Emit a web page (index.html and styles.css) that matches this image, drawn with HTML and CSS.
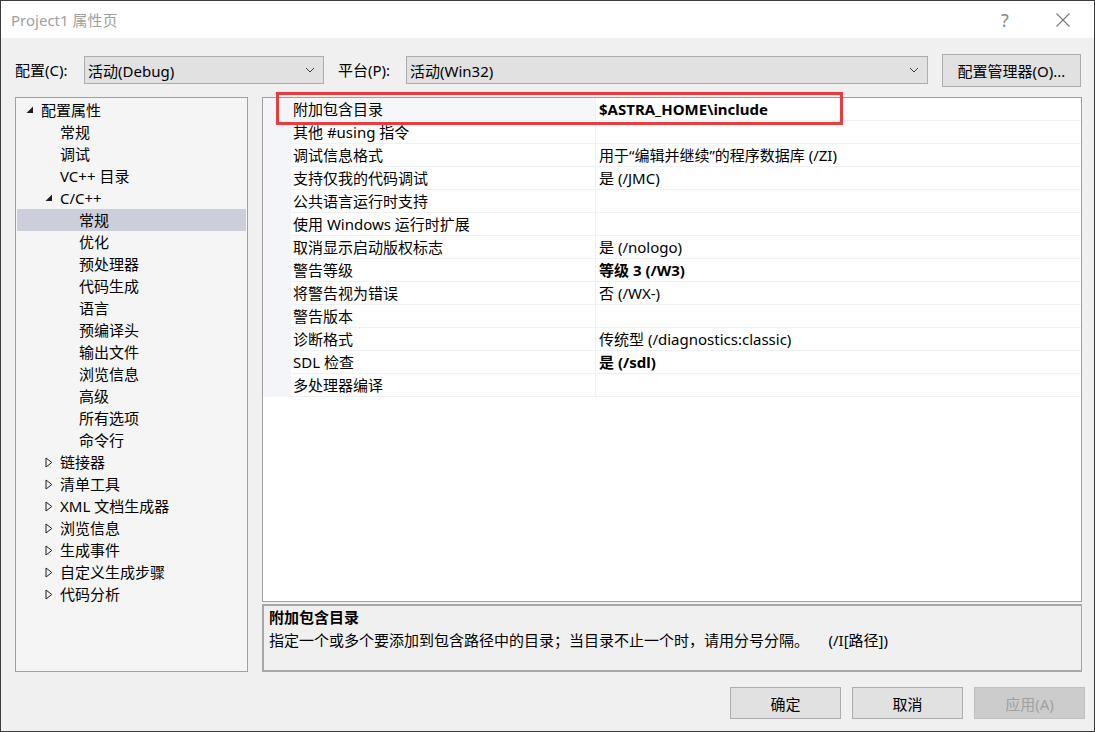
FILE: index.html
```html
<!DOCTYPE html>
<html lang="zh-CN">
<head>
<meta charset="utf-8">
<title>Project1 属性页</title>
<link rel="stylesheet" href="styles.css">
</head>
<body>
<div class="window">
  <div class="titlebar">
    <span class="title">Project1 属性页</span>
    <span class="help">?</span>
    <span class="close">
      <svg width="16" height="16" viewBox="0 0 16 16"><path d="M1.5 1.5 L14.5 14.5 M14.5 1.5 L1.5 14.5" stroke="#7a7a7a" stroke-width="1.1" fill="none"/></svg>
    </span>
  </div>

  <div class="toolbar">
    <span class="label lbl-config">配置(C):</span>
    <div class="combo combo-config">
      <span>活动(Debug)</span>
      <svg class="chev" width="10" height="6" viewBox="0 0 10 6"><path d="M1 1 L5 5 L9 1" stroke="#404040" stroke-width="1" fill="none"/></svg>
    </div>
    <span class="label lbl-platform">平台(P):</span>
    <div class="combo combo-platform">
      <span>活动(Win32)</span>
      <svg class="chev" width="10" height="6" viewBox="0 0 10 6"><path d="M1 1 L5 5 L9 1" stroke="#404040" stroke-width="1" fill="none"/></svg>
    </div>
    <div class="btn btn-manager">配置管理器(O)...</div>
  </div>

  <div class="main">
    <div class="tree">
      <div class="node l1"><span class="exp"><svg width="8" height="8" viewBox="0 0 8 8"><path d="M7 0.5 L7 7 L0.5 7 Z" fill="#1e1e1e"/></svg></span>配置属性</div>
      <div class="node l2">常规</div>
      <div class="node l2">调试</div>
      <div class="node l2">VC++ 目录</div>
      <div class="node l2e"><span class="exp"><svg width="8" height="8" viewBox="0 0 8 8"><path d="M7 0.5 L7 7 L0.5 7 Z" fill="#1e1e1e"/></svg></span>C/C++</div>
      <div class="node l3 selected">常规</div>
      <div class="node l3">优化</div>
      <div class="node l3">预处理器</div>
      <div class="node l3">代码生成</div>
      <div class="node l3">语言</div>
      <div class="node l3">预编译头</div>
      <div class="node l3">输出文件</div>
      <div class="node l3">浏览信息</div>
      <div class="node l3">高级</div>
      <div class="node l3">所有选项</div>
      <div class="node l3">命令行</div>
      <div class="node l2e"><span class="col"><svg width="8" height="11" viewBox="0 0 8 11"><path d="M1 1 L6.8 5.5 L1 10 Z" fill="none" stroke="#1e1e1e" stroke-width="1"/></svg></span>链接器</div>
      <div class="node l2e"><span class="col"><svg width="8" height="11" viewBox="0 0 8 11"><path d="M1 1 L6.8 5.5 L1 10 Z" fill="none" stroke="#1e1e1e" stroke-width="1"/></svg></span>清单工具</div>
      <div class="node l2e"><span class="col"><svg width="8" height="11" viewBox="0 0 8 11"><path d="M1 1 L6.8 5.5 L1 10 Z" fill="none" stroke="#1e1e1e" stroke-width="1"/></svg></span>XML 文档生成器</div>
      <div class="node l2e"><span class="col"><svg width="8" height="11" viewBox="0 0 8 11"><path d="M1 1 L6.8 5.5 L1 10 Z" fill="none" stroke="#1e1e1e" stroke-width="1"/></svg></span>浏览信息</div>
      <div class="node l2e"><span class="col"><svg width="8" height="11" viewBox="0 0 8 11"><path d="M1 1 L6.8 5.5 L1 10 Z" fill="none" stroke="#1e1e1e" stroke-width="1"/></svg></span>生成事件</div>
      <div class="node l2e"><span class="col"><svg width="8" height="11" viewBox="0 0 8 11"><path d="M1 1 L6.8 5.5 L1 10 Z" fill="none" stroke="#1e1e1e" stroke-width="1"/></svg></span>自定义生成步骤</div>
      <div class="node l2e"><span class="col"><svg width="8" height="11" viewBox="0 0 8 11"><path d="M1 1 L6.8 5.5 L1 10 Z" fill="none" stroke="#1e1e1e" stroke-width="1"/></svg></span>代码分析</div>
    </div>

    <div class="right">
      <div class="grid">
        <div class="rows">
          <div class="row first"><div class="name">附加包含目录</div><div class="value bold">$ASTRA_HOME\include</div></div>
          <div class="row"><div class="name">其他 #using 指令</div><div class="value"></div></div>
          <div class="row"><div class="name">调试信息格式</div><div class="value">用于“编辑并继续”的程序数据库 (/ZI)</div></div>
          <div class="row"><div class="name">支持仅我的代码调试</div><div class="value">是 (/JMC)</div></div>
          <div class="row"><div class="name">公共语言运行时支持</div><div class="value"></div></div>
          <div class="row"><div class="name">使用 Windows 运行时扩展</div><div class="value"></div></div>
          <div class="row"><div class="name">取消显示启动版权标志</div><div class="value">是 (/nologo)</div></div>
          <div class="row"><div class="name">警告等级</div><div class="value bold">等级 3 (/W3)</div></div>
          <div class="row"><div class="name">将警告视为错误</div><div class="value">否 (/WX-)</div></div>
          <div class="row"><div class="name">警告版本</div><div class="value"></div></div>
          <div class="row"><div class="name">诊断格式</div><div class="value">传统型 (/diagnostics:classic)</div></div>
          <div class="row"><div class="name">SDL 检查</div><div class="value bold">是 (/sdl)</div></div>
          <div class="row"><div class="name">多处理器编译</div><div class="value"></div></div>
        </div>
        <div class="highlight"></div>
      </div>
      <div class="desc">
        <div class="desc-title">附加包含目录</div>
        <div class="desc-text">指定一个或多个要添加到包含路径中的目录；当目录不止一个时，请用分号分隔。     (/I[路径])</div>
      </div>
    </div>
  </div>

  <div class="footer">
    <div class="btn btn-foot">确定</div>
    <div class="btn btn-foot">取消</div>
    <div class="btn btn-foot disabled">应用(A)</div>
  </div>
</div>
</body>
</html>
```

FILE: styles.css
```css
* { box-sizing: border-box; }
html, body { margin: 0; padding: 0; }
body {
  width: 1095px;
  height: 732px;
  overflow: hidden;
  font-family: "Noto Sans", "Noto Sans CJK SC", sans-serif;
  font-size: 15px;
  color: #000;
}
.window {
  width: 1095px;
  height: 732px;
  border: 1px solid #3c3c3c;
  background: #f0f0f0;
  display: flex;
  flex-direction: column;
}
.titlebar {
  height: 37px;
  background: #fff;
  display: flex;
  align-items: center;
  padding-left: 10px;
  flex: none;
}
.title {
  color: #a0a0a0;
  font-size: 15px;
  flex: 1;
  line-height: 20px;
}
.help {
  color: #8a8a8a;
  font-size: 18px;
  width: 20px;
  margin-right: 34px;
}
.close {
  width: 16px;
  height: 16px;
  margin-right: 23px;
  display: flex;
}
.toolbar {
  height: 32px;
  margin-top: 16px;
  display: flex;
  align-items: center;
  padding-left: 14px;
  flex: none;
}
.label { line-height: 20px; }
.lbl-config { width: 69px; }
.lbl-platform { width: 68px; margin-left: 14px; }
.combo {
  height: 28px;
  border: 1px solid #adadad;
  background: #e1e1e1;
  display: flex;
  align-items: center;
  padding-left: 3px;
  padding-right: 8px;
  justify-content: space-between;
}
.combo-config { width: 240px; }
.combo-platform { width: 522px; }
.btn {
  border: 1px solid #adadad;
  background: #e1e1e1;
  display: flex;
  align-items: center;
  justify-content: center;
}
.btn-manager {
  width: 139px;
  height: 33px;
  margin-left: 14px;
}
.main {
  display: flex;
  margin-top: 11px;
  padding-left: 14px;
  height: 575px;
  flex: none;
}
.tree {
  width: 233px;
  height: 575px;
  border: 1px solid #a0a0a0;
  background: #f5f5f5;
  padding: 1px;
}
.node {
  height: 22px;
  line-height: 22px;
  position: relative;
  white-space: nowrap;
}
.node.l1 { padding-left: 24px; }
.node.l2 { padding-left: 43px; }
.node.l2e { padding-left: 43px; }
.node.l3 { padding-left: 62px; }
.node.selected { background: #cccedb; }
.exp, .col {
  position: absolute;
  display: flex;
}
.l1 .exp { left: 9px; top: 7px; }
.l2e .exp { left: 28px; top: 7px; }
.l2e .col { left: 28px; top: 6px; }
.right {
  margin-left: 14px;
  width: 820px;
  display: flex;
  flex-direction: column;
}
.grid {
  position: relative;
  height: 505px;
  border: 1px solid #a0a0a0;
  background: #fff;
}
.rows {
  border-left: 28px solid #f3f5f9;
}
.row {
  display: flex;
  height: 23px;
  border-bottom: 1px solid #eef1f5;
}
.name {
  width: 305px;
  padding-left: 2px;
  line-height: 22px;
  border-right: 1px solid #eef1f5;
  white-space: nowrap;
}
.row.first .name { background: #f5f7fa; }
.value {
  flex: 1;
  padding-left: 3px;
  line-height: 22px;
  white-space: nowrap;
}
.bold { font-weight: bold; }
.highlight {
  position: absolute;
  left: 13px;
  top: -6px;
  width: 567px;
  height: 33px;
  border: 3px solid #ec3b3d;
}
.desc {
  margin-top: 2px;
  height: 68px;
  border: 2px solid #a8a8a8;
  border-right-width: 1px;
  background: #f0f0f0;
  padding: 0 0 0 5px;
}
.desc-title {
  font-weight: bold;
  line-height: 22px;
}
.desc-text {
  line-height: 24px;
  white-space: pre;
}
.footer {
  display: flex;
  justify-content: flex-end;
  padding-right: 9px;
  margin-top: 15px;
  gap: 11px;
}
.btn-foot {
  width: 111px;
  height: 32px;
}
.btn-foot.disabled {
  background: #cccccc;
  border-color: #bfbfbf;
  color: #a0a0a0;
}
```
